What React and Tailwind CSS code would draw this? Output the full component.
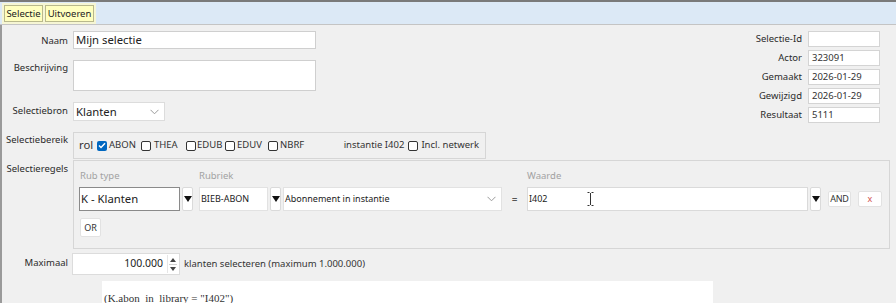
import React from "react";

const F = { fontFamily: '"Noto Sans", "Open Sans", sans-serif' };

function Cb({ checked }) {
  return checked ? (
    <span className="inline-flex w-[10px] h-[10px] rounded-[2px] bg-[#0067c0] items-center justify-center shrink-0">
      <svg width="8" height="7" viewBox="0 0 8 7"><path d="M1 3.5 L3 5.5 L7 1.2" fill="none" stroke="#fff" strokeWidth="1.4" /></svg>
    </span>
  ) : (
    <span className="inline-block w-[10px] h-[10px] rounded-[2px] border border-[#333] bg-white shrink-0" />
  );
}

function DropBtn() {
  return (
    <div className="w-[11px] h-[24px] bg-white border border-[#dadada] rounded-[2px] flex items-center justify-center shrink-0">
      <svg width="8" height="6" viewBox="0 0 8 6"><path d="M0 0 H8 L4 6 Z" fill="#111" /></svg>
    </div>
  );
}

function Chevron() {
  return (
    <svg width="9" height="6" viewBox="0 0 9 6"><path d="M0.5 0.8 L4.5 4.8 L8.5 0.8" fill="none" stroke="#9a9a9a" strokeWidth="1" /></svg>
  );
}

function Label({ children, className = "" }) {
  return (
    <div className={"w-[66px] shrink-0 text-right text-[9.5px] text-[#2a2a2a] leading-[14px] whitespace-nowrap " + className}>{children}</div>
  );
}

export default function App() {
  return (
    <div style={F} className="w-[896px] h-[303px] overflow-hidden bg-[#f0f0f0] text-[#222]">
      {/* top */}
      <div className="h-[2px] bg-[#7a7a7a]" />
      <div className="h-[23px] bg-[#dce9f6] border-b border-[#c4c4c4] flex items-start pl-[2px] pt-[1px]">
        <div className="flex gap-[2px] bg-[#f6f6d4] px-[2px] py-[2px]">
          <div className="h-[17px] w-[39px] border border-[#b9b98c] bg-[#ffffbf] text-[9.5px] leading-[15px] text-center text-[#222]">Selectie</div>
          <div className="h-[17px] w-[49px] border border-[#b9b98c] bg-[#ffffbf] text-[9.5px] leading-[15px] text-center text-[#222]">Uitvoeren</div>
        </div>
      </div>

      <div className="border-l-2 border-[#9a9a9a] h-[278px]">
        <div className="flex items-start">
          {/* left form */}
          <div className="flex flex-col">
            <div className="flex items-start mt-[6px] gap-[5px]">
              <Label className="pt-[3px]">Naam</Label>
              <div className="w-[243px] h-[18px] bg-white border border-[#cfcfcf] text-[11.3px] leading-[16px] pl-[2px] text-[#222]">Mijn selectie</div>
            </div>
            <div className="flex items-start mt-[11px] gap-[5px]">
              <Label className="pt-[1px]">Beschrijving</Label>
              <div className="w-[243px] h-[31px] bg-white border border-[#cfcfcf]" />
            </div>
            <div className="flex items-start mt-[11px] gap-[5px]">
              <Label className="pt-[2px]">Selectiebron</Label>
              <div className="w-[92px] h-[19px] bg-white border border-[#dcdcdc] flex items-center justify-between pl-[2px] pr-[5px]">
                <span className="text-[11.3px] leading-[16px] text-[#222]">Klanten</span>
                <Chevron />
              </div>
            </div>
            <div className="flex items-start mt-[11px] gap-[5px]">
              <Label className="pt-[1px]">Selectiebereik</Label>
              <div className="w-[413px] h-[27px] border border-[#d6d6d6] flex items-center pl-[5px] text-[9.5px] text-[#333] whitespace-nowrap">
                <span className="text-[11.3px] w-[18px] shrink-0">rol</span>
                <Cb checked />
                <span className="ml-[2px] w-[32px] shrink-0">ABON</span>
                <Cb />
                <span className="ml-[3px] w-[32px] shrink-0">THEA</span>
                <Cb />
                <span className="ml-[1px] w-[28px] shrink-0">EDUB</span>
                <Cb />
                <span className="ml-[2px] w-[31px] shrink-0">EDUV</span>
                <Cb />
                <span className="ml-[2px]">NBRF</span>
                <span className="ml-auto mr-[4px]">instantie I402</span>
                <Cb />
                <span className="ml-[3px] mr-[6px]">Incl. netwerk</span>
              </div>
            </div>
          </div>

          {/* right panel */}
          <div className="ml-auto mr-[16px] mt-[6px] grid grid-cols-[auto_72px] gap-x-[6px] gap-y-[3px] items-center content-start">
            {[
              ["Selectie-Id", ""],
              ["Actor", "323091"],
              ["Gemaakt", "2026-01-29"],
              ["Gewijzigd", "2026-01-29"],
              ["Resultaat", "5111"],
            ].map(([l, v]) => (
              <React.Fragment key={l}>
                <div className="text-right text-[9.5px] leading-[14px] text-[#2a2a2a]">{l}</div>
                <div className="h-[16px] bg-white border border-[#d4d4d4] text-[9.5px] leading-[14px] pl-[3px] text-[#333]">{v}</div>
              </React.Fragment>
            ))}
          </div>
        </div>

        {/* Selectieregels */}
        <div className="flex items-start mt-[1px] gap-[5px]">
          <Label className="pt-[2px]">Selectieregels</Label>
          <div className="w-[817px] h-[89px] border border-[#d6d6d6] pl-[5px] pt-[8px]">
            <div className="flex items-end">
              <div className="flex flex-col">
                <div className="text-[9.5px] leading-[14px] text-[#a2a2a2] pl-[1px] mb-[4px]">Rub type</div>
                <div className="flex gap-[2px]">
                  <div className="w-[101px] h-[24px] bg-white border border-[#8a8a8a] text-[11.3px] leading-[22px] pl-[1px] text-[#222]">K - Klanten</div>
                  <DropBtn />
                </div>
              </div>
              <div className="flex flex-col ml-[6px]">
                <div className="text-[9.5px] leading-[14px] text-[#a2a2a2] mb-[4px]">Rubriek</div>
                <div className="flex gap-[2px]">
                  <div className="w-[69px] h-[24px] bg-white border border-[#e2e2e2] text-[9px] leading-[22px] pl-[1px] text-[#222]">BIEB-ABON</div>
                  <DropBtn />
                  <div className="w-[219px] h-[24px] bg-white border border-[#e2e2e2] flex items-center justify-between pl-[1px] pr-[5px]">
                    <span className="text-[9px] text-[#222]">Abonnement in instantie</span>
                    <Chevron />
                  </div>
                </div>
              </div>
              <div className="w-[25px] h-[24px] flex items-center justify-center text-[10px] text-[#555]">=</div>
              <div className="flex flex-col">
                <div className="text-[9.5px] leading-[14px] text-[#a2a2a2] mb-[4px]">Waarde</div>
                <div className="flex gap-[2px]">
                  <div className="relative w-[281px] h-[24px] bg-white border border-[#dadada] text-[9px] leading-[22px] pl-[1px] text-[#222]">
                    I402
                    <svg className="absolute left-[59px] top-[4px]" width="7" height="14" viewBox="0 0 7 14">
                      <path d="M0.5 0.5 H2.5 M4.5 0.5 H6.5 M3.5 1 V13 M0.5 13.5 H2.5 M4.5 13.5 H6.5" fill="none" stroke="#333" strokeWidth="1" />
                    </svg>
                  </div>
                  <DropBtn />
                </div>
              </div>
              <div className="h-[24px] flex items-center ml-[7px]">
                <div className="w-[23px] h-[16px] bg-white border border-[#e2e2e2] rounded-[2px] text-[9px] leading-[14px] text-center text-[#333] tracking-[-0.3px]">AND</div>
              </div>
              <div className="h-[24px] flex items-center ml-[7px]">
                <div className="w-[24px] h-[16px] bg-white border border-[#e2e2e2] rounded-[2px] text-[9px] leading-[13px] text-center text-[#d05050]">x</div>
              </div>
            </div>
            <div className="mt-[7px] ml-[1px] w-[21px] h-[19px] bg-white border border-[#e2e2e2] rounded-[2px] text-[9px] leading-[17px] text-center text-[#333]">OR</div>
          </div>
        </div>

        {/* Maximaal */}
        <div className="flex items-start mt-[4px] gap-[4px]">
          <Label className="pt-[3px]">Maximaal</Label>
          <div className="w-[108px] h-[22px] bg-white border border-[#dcdcdc] flex items-center justify-end pr-[2px]">
            <span className="text-[10.5px] text-[#222] mr-[4px]">100.000</span>
            <div className="w-[10px] h-[18px] flex flex-col items-center justify-center border-l border-[#e6e6e6]">
              <svg width="6" height="4" viewBox="0 0 6 4"><path d="M0 4 L3 0 L6 4 Z" fill="#444" /></svg>
              <div className="w-[8px] h-[1px] bg-[#cfcfcf] my-[2px]" />
              <svg width="6" height="4" viewBox="0 0 6 4"><path d="M0 0 H6 L3 4 Z" fill="#444" /></svg>
            </div>
          </div>
          <span className="text-[9.5px] leading-[22px] text-[#333]">klanten selecteren (maximum 1.000.000)</span>
        </div>

        {/* query box */}
        <div className="ml-[100px] mt-[6px] w-[611px] h-[30px] bg-white pl-[2px] pt-[3px]">
          <span style={{ fontFamily: '"Liberation Serif", serif' }} className="text-[11px] text-[#333]">(K.abon_in_library = "I402")</span>
        </div>
      </div>
    </div>
  );
}
